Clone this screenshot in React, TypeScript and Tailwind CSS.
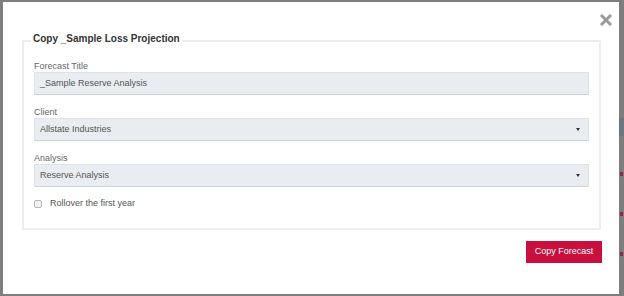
import { useState } from "react";

const FONT = { fontFamily: '"Liberation Sans", Arial, sans-serif' };

function SelectBox({ value }: { value: string }) {
  return (
    <div className="flex items-center justify-between h-[23px] px-[5px] bg-[#e9ecf0] border border-[#dfe3e8] border-b-[#cdd2d8] text-[9px] text-[#555]">
      <span>{value}</span>
      <span className="mr-[3px] w-0 h-0 border-l-[2px] border-r-[2px] border-t-[3px] border-l-transparent border-r-transparent border-t-[#333]"></span>
    </div>
  );
}

function CopyForecastModal() {
  const [rollover, setRollover] = useState(false);

  return (
    <div className="relative flex flex-col w-[616px] h-[292px] pt-[30px] bg-white">
      <button className="absolute top-[12px] right-[7px] w-[12px] h-[12px] text-[#9a9a9a]">
        <svg viewBox="0 0 12 12" width="12" height="12">
          <path d="M2 2 L10 10 M10 2 L2 10" stroke="currentColor" strokeWidth="3" strokeLinecap="square" />
        </svg>
      </button>

      <fieldset className="ml-[19px] mr-[18px] border-2 border-[#eeeeee] px-[10px] pt-[11px] pb-[18px]">
        <legend className="-ml-[3px] px-[2px] pb-[3px] text-[10px] leading-[14px] font-bold text-[#333]">
          Copy _Sample Loss Projection
        </legend>

        <label className="block text-[9px] leading-[12px] text-[#666]">Forecast Title</label>
        <div className="flex items-center h-[23px] px-[5px] bg-[#e9ecf0] border border-[#dfe3e8] border-b-[#cdd2d8] text-[9px] text-[#555]">
          _Sample Reserve Analysis
        </div>

        <label className="block mt-[11px] text-[9px] leading-[12px] text-[#666]">Client</label>
        <SelectBox value="Allstate Industries" />

        <label className="block mt-[11px] text-[9px] leading-[12px] text-[#666]">Analysis</label>
        <SelectBox value="Reserve Analysis" />

        <div className="flex items-center gap-[8px] mt-[11px] h-[12px]">
          <button
            onClick={() => setRollover(!rollover)}
            className="w-[8px] h-[8px] rounded-[2px] border border-[#b5b5b5] bg-[#f2f2f2]"
          ></button>
          <span className="text-[9px] text-[#555]">Rollover the first year</span>
        </div>
      </fieldset>

      <div className="flex justify-end mr-[17px] mt-[11px]">
        <button className="w-[76px] h-[22px] bg-[#c80f3e] text-white text-[9px]">
          Copy Forecast
        </button>
      </div>
    </div>
  );
}

export default function App() {
  return (
    <div className="flex w-[624px] h-[296px] bg-[#7e7e7e] pt-[2px] pl-[3px] overflow-hidden" style={FONT}>
      <CopyForecastModal />
      {/* page behind the overlay, only a sliver shows on the right */}
      <div className="flex flex-col items-center w-[5px] pt-[116px] gap-[36px]">
        <div className="w-[5px] h-[18px] bg-[#6f7680]"></div>
        <div className="w-[3px] h-[4px] bg-[#8a2a3a]"></div>
        <div className="w-[3px] h-[4px] bg-[#8a2a3a]"></div>
        <div className="w-[3px] h-[4px] bg-[#8a2a3a]"></div>
      </div>
    </div>
  );
}
